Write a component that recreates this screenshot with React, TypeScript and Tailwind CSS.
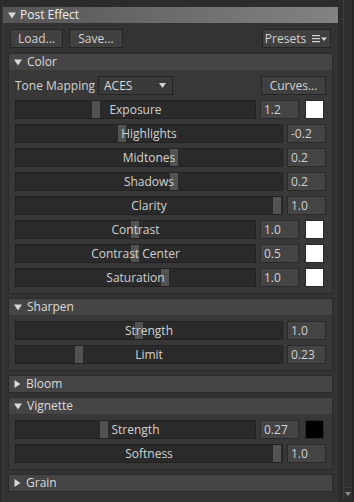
import React from "react";

const font = { fontFamily: '"Open Sans", "Noto Sans", sans-serif' };

function Btn({ children, className = "" }: { children: React.ReactNode; className?: string }) {
  return (
    <div
      className={
        "h-[19px] flex items-center justify-center bg-[#404040] border border-[#252525] text-[#d4d4d4] text-[12px] leading-none " +
        className
      }
    >
      {children}
    </div>
  );
}

function Tri({ open }: { open: boolean }) {
  return open ? (
    <svg width="8" height="7" viewBox="0 0 8 7" className="shrink-0">
      <path d="M0 0.5 L8 0.5 L4 6.5 Z" fill="#d8d8d8" />
    </svg>
  ) : (
    <svg width="7" height="8" viewBox="0 0 7 8" className="shrink-0">
      <path d="M0.5 0 L6.5 4 L0.5 8 Z" fill="#d8d8d8" />
    </svg>
  );
}

function SectionHeader({ title, open }: { title: string; open: boolean }) {
  return (
    <div className="h-[16px] bg-[#454545] flex items-center pl-[5px] gap-[5px] text-[12px] text-[#dcdcdc] leading-none">
      <Tri open={open} />
      <span>{title}</span>
    </div>
  );
}

function Slider({
  label,
  value,
  handle,
  swatch,
}: {
  label: string;
  value: string;
  handle: number;
  swatch?: "white" | "black";
}) {
  return (
    <div className="h-[19px] flex">
      <div
        className={
          "relative h-full bg-[#2a2a2a] border border-[#222] flex items-center justify-center " +
          (swatch ? "w-[241px]" : "flex-1")
        }
      >
        <div
          className="absolute top-0 bottom-0 w-[8px] bg-[#535353]"
          style={{ left: handle - 1 }}
        />
        <span className="relative text-[12px] text-[#d2d2d2] leading-none">{label}</span>
      </div>
      <div className="ml-[4px] w-[39px] h-full bg-[#444] border border-[#2a2a2a] flex items-center pl-[3px] text-[12px] text-[#d2d2d2] leading-none">
        {value}
      </div>
      {swatch && (
        <div
          className={
            "ml-[6px] w-[19px] h-[19px] border border-[#2a2a2a] " +
            (swatch === "white" ? "bg-white" : "bg-black")
          }
        />
      )}
    </div>
  );
}

function Section({ title, open, children }: { title: string; open: boolean; children?: React.ReactNode }) {
  return (
    <div className="mx-[5px] border border-[#2a2a2a] bg-[#383838]">
      <SectionHeader title={title} open={open} />
      {open && <div className="px-[6px] pt-[6px] pb-[6px] flex flex-col gap-[5px]">{children}</div>}
    </div>
  );
}

export default function App() {
  return (
    <div className="w-[354px] h-[502px] bg-[#2c2c2c] flex overflow-hidden" style={font}>
      <div className="w-[2px] bg-[#2a2a2a]" />
      <div className="w-[1px] bg-[#3a3a3a]" />
      <div className="w-[335px] flex flex-col pt-[7px]">
        <div className="h-[16px] bg-gradient-to-r from-[#555] to-[#838383] flex items-center pl-[5px] gap-[4px] text-[12px] text-[#f0f0f0] leading-none">
          <Tri open={true} />
          <span>Post Effect</span>
        </div>
        <div className="flex-1 bg-[#333] flex flex-col pb-[7px]">
          <div className="flex px-[7px] pt-[6px] pb-[5px]">
            <Btn className="w-[53px]">Load...</Btn>
            <Btn className="w-[54px] ml-[6px]">Save...</Btn>
            <div className="flex-1" />
            <Btn className="w-[69px] gap-[6px]">
              <span>Presets</span>
              <svg width="16" height="8" viewBox="0 0 16 8">
                <rect x="0" y="0" width="8" height="1.2" fill="#d4d4d4" />
                <rect x="0" y="3" width="8" height="1.2" fill="#d4d4d4" />
                <rect x="0" y="6" width="8" height="1.2" fill="#d4d4d4" />
                <path d="M9 2.5 L15 2.5 L12 6 Z" fill="#d4d4d4" />
              </svg>
            </Btn>
          </div>
          <div className="flex flex-col gap-[4px]">
            <Section title="Color" open={true}>
              <div className="h-[19px] flex items-center">
                <span className="text-[12px] text-[#d2d2d2] leading-none w-[83px]">Tone Mapping</span>
                <div className="w-[75px] h-[19px] bg-[#3a3a3a] border border-[#232323] flex items-center pl-[5px] pr-[6px] text-[12px] text-[#dcdcdc] leading-none">
                  <span className="flex-1">ACES</span>
                  <svg width="7" height="5" viewBox="0 0 7 5">
                    <path d="M0 0 L7 0 L3.5 5 Z" fill="#d4d4d4" />
                  </svg>
                </div>
                <div className="flex-1" />
                <Btn className="w-[65px]">Curves...</Btn>
              </div>
              <Slider label="Exposure" value="1.2" handle={77} swatch="white" />
              <Slider label="Highlights" value="-0.2" handle={103} />
              <Slider label="Midtones" value="0.2" handle={155} />
              <Slider label="Shadows" value="0.2" handle={155} />
              <Slider label="Clarity" value="1.0" handle={258} />
              <Slider label="Contrast" value="1.0" handle={116} swatch="white" />
              <Slider label="Contrast Center" value="0.5" handle={116} swatch="white" />
              <Slider label="Saturation" value="1.0" handle={146} swatch="white" />
            </Section>
            <Section title="Sharpen" open={true}>
              <Slider label="Strength" value="1.0" handle={120} />
              <Slider label="Limit" value="0.23" handle={60} />
            </Section>
            <Section title="Bloom" open={false} />
            <Section title="Vignette" open={true}>
              <Slider label="Strength" value="0.27" handle={85} swatch="black" />
              <Slider label="Softness" value="1.0" handle={258} />
            </Section>
            <Section title="Grain" open={false} />
          </div>
        </div>
      </div>
      <div className="w-[5px]" />
      <div className="w-[10px] flex flex-col border-l border-[#3c3c3c] border-r border-r-[#242424] bg-[#303030] mb-[3px]">
        <div className="flex-1" />
        <div className="h-[12px] flex items-center justify-center border-t border-[#3c3c3c]">
          <svg width="6" height="4" viewBox="0 0 6 4">
            <path d="M0 0 L6 0 L3 4 Z" fill="#8a8a8a" />
          </svg>
        </div>
      </div>
    </div>
  );
}
